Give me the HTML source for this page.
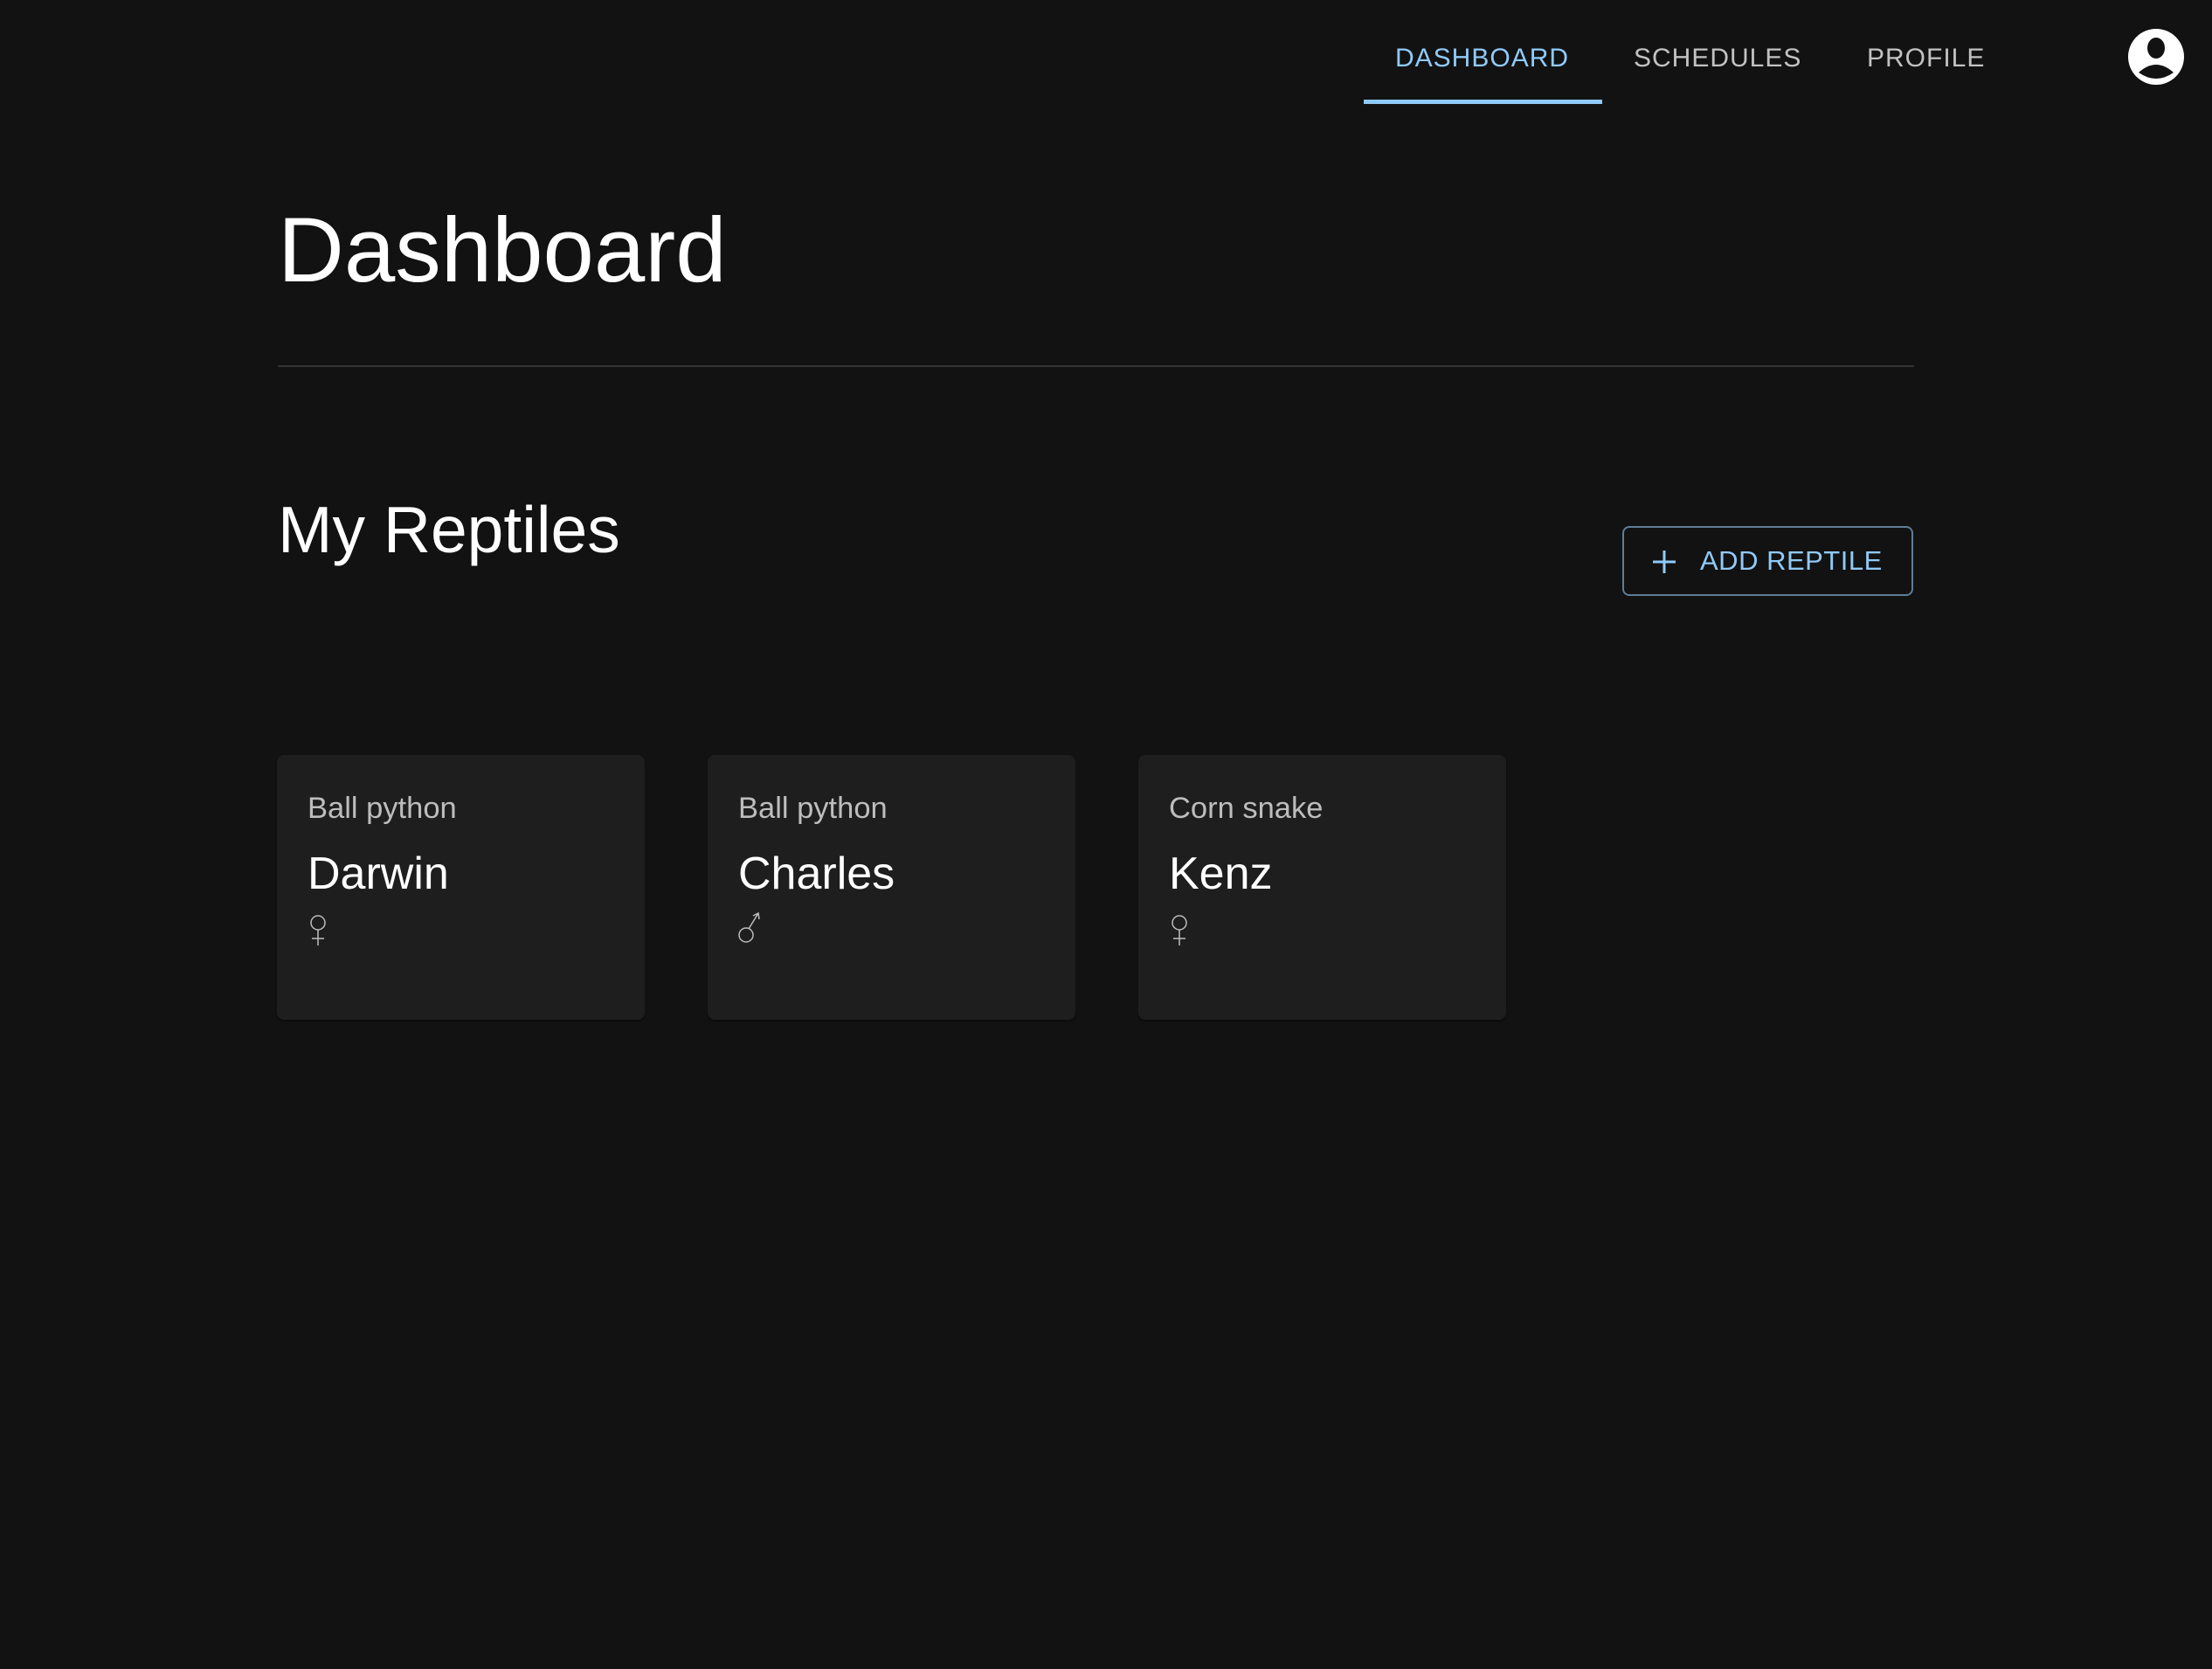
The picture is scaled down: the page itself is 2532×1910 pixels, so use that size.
<!DOCTYPE html>
<html><head><meta charset="utf-8"><style>
html,body{margin:0;padding:0;background:#121212;width:2532px;height:1910px;overflow:hidden;font-family:"Liberation Sans",Arial,sans-serif;}
.a{position:absolute;line-height:1;white-space:nowrap;}
.nav{font-size:30px;letter-spacing:1px;color:#c2c2c2;top:52px;}
.card{position:absolute;top:864px;width:421px;height:303px;background:#1e1e1e;border-radius:8px;box-shadow:0 2px 2px rgba(0,0,0,.4);}
.sp{position:absolute;left:35px;top:44px;font-size:34.5px;color:#bdbdbd;line-height:1;white-space:nowrap;}
.nm{position:absolute;left:35px;top:110px;font-size:52px;color:#fff;line-height:1;white-space:nowrap;}
.sym{position:absolute;left:30px;top:176px;}
</style></head><body>
<div class="a nav" style="left:1597px;color:#90caf9">DASHBOARD</div>
<div class="a nav" style="left:1870px">SCHEDULES</div>
<div class="a nav" style="left:2137px">PROFILE</div>
<div class="a" style="left:1561px;top:114px;width:273px;height:5px;background:#90caf9"></div>
<svg class="a" style="left:2434px;top:31px" width="68" height="68" viewBox="0 0 68 68">
<circle cx="34" cy="34" r="32" fill="#fff"/>
<ellipse cx="34" cy="24" rx="10" ry="12" fill="#121212"/>
<path d="M14 52 Q34 34 54 52 Q34 66 14 52Z" fill="#121212"/>
</svg>
<div class="a" style="left:318px;top:234px;font-size:105px;color:#fff">Dashboard</div>
<div class="a" style="left:318px;top:418px;width:1873px;height:2px;background:#333"></div>
<div class="a" style="left:318px;top:569px;font-size:75px;color:#fff">My Reptiles</div>
<div class="a" style="left:1857px;top:602px;width:329px;height:76px;border:2px solid #5f7d97;border-radius:8px"></div>
<svg class="a" style="left:1890px;top:628px" width="30" height="30" viewBox="0 0 30 30"><path d="M15 2V28M2 15H28" stroke="#90caf9" stroke-width="3"/></svg>
<div class="a" style="left:1946px;top:626px;font-size:31px;color:#90caf9;letter-spacing:0.5px">ADD REPTILE</div>

<div class="card" style="left:317px">
<div class="sp">Ball python</div><div class="nm">Darwin</div>
<svg class="sym" width="40" height="44" viewBox="0 0 40 44"><circle cx="17" cy="16" r="8" fill="none" stroke="#bdbdbd" stroke-width="1.5"/><path d="M17 24V42M10 34H24" stroke="#bdbdbd" stroke-width="1.5"/></svg>
</div>
<div class="card" style="left:810px">
<div class="sp">Ball python</div><div class="nm">Charles</div>
<svg class="sym" width="40" height="44" viewBox="0 0 40 44"><circle cx="14" cy="30" r="8" fill="none" stroke="#bdbdbd" stroke-width="1.5"/><path d="M17 23L28 5M22 8L28 5L29 12" fill="none" stroke="#bdbdbd" stroke-width="1.5"/></svg>
</div>
<div class="card" style="left:1303px">
<div class="sp">Corn snake</div><div class="nm">Kenz</div>
<svg class="sym" width="40" height="44" viewBox="0 0 40 44"><circle cx="17" cy="16" r="8" fill="none" stroke="#bdbdbd" stroke-width="1.5"/><path d="M17 24V42M10 34H24" stroke="#bdbdbd" stroke-width="1.5"/></svg>
</div>
</body></html>
